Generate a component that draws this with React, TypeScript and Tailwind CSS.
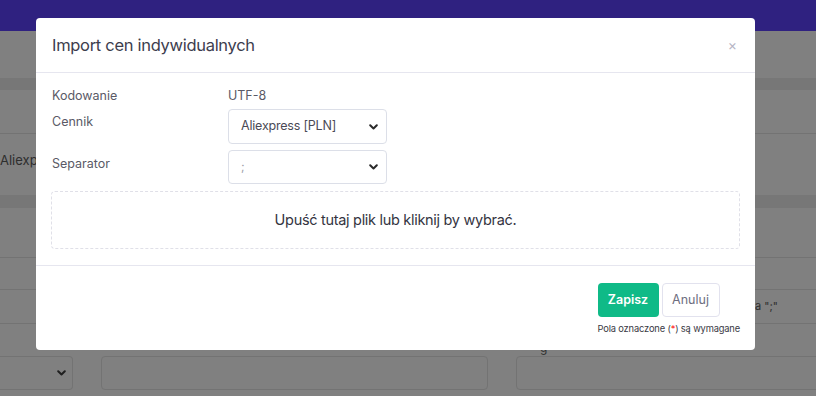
import React from "react";

const Chevron = ({ className = "" }: { className?: string }) => (
  <svg className={className} width="9" height="6" viewBox="0 0 9 6" fill="none">
    <path d="M1.2 1.2 L4.5 4.5 L7.8 1.2" stroke="currentColor" strokeWidth="2" strokeLinecap="round" strokeLinejoin="round" />
  </svg>
);

function Background() {
  return (
    <div className="flex flex-col w-[816px] h-[396px] bg-[#808080] overflow-hidden">
      <div className="h-[31px] bg-[#2f2180] shrink-0" />
      <div className="h-[47px] shrink-0" />
      <div className="h-[12px] bg-[#777777] shrink-0" />
      <div className="h-[44px] shrink-0 border-b border-[#737373]" />
      <div className="h-[61px] shrink-0 flex items-center">
        <div className="w-[36px] overflow-hidden whitespace-nowrap -mt-[12px]">
          <span className="text-[13px] text-[#2e2e2e]">Aliexpr</span>
        </div>
      </div>
      <div className="h-[13px] bg-[#777777] shrink-0" />
      <div className="h-[50px] shrink-0 border-b border-[#737373]" />
      <div className="h-[32px] shrink-0 border-b border-[#737373]" />
      <div className="h-[34px] shrink-0 border-b border-[#737373] flex items-center pl-[755px]">
        <span className="text-[11px] text-[#2e2e2e] whitespace-nowrap">a ";"</span>
      </div>
      <div className="h-[32px] shrink-0 flex items-end pl-[540px]">
        <span className="text-[12px] text-[#333] leading-none mb-[2px]">g</span>
      </div>
      <div className="flex gap-[28px] shrink-0">
        <div className="w-[73px] h-[34px] shrink-0 border border-[#737373] rounded-r-[4px] border-l-0 flex items-center justify-end pr-[6px] text-[#1f1f1f]">
          <Chevron />
        </div>
        <div className="w-[387px] h-[34px] border border-[#737373] rounded-[4px] shrink-0" />
        <div className="w-[310px] h-[34px] border border-[#737373] rounded-[4px] shrink-0" />
      </div>
    </div>
  );
}

export default function App() {
  return (
    <div className="relative w-[816px] h-[396px] overflow-hidden" style={{ fontFamily: "Inter, 'Noto Sans', sans-serif" }}>
      <Background />
      <div className="absolute left-[36px] top-[18px] w-[719px] h-[332px] bg-white rounded-[4px] flex flex-col">
        <div className="h-[55px] border-b border-[#e6e6ef] flex items-center justify-between pl-[16px] pr-[18px] shrink-0">
          <span className="text-[16.5px] text-[#3d3d4e] tracking-[-0.3px]">Import cen indywidualnych</span>
          <span className="text-[#b4b4c4] text-[14px] leading-none">×</span>
        </div>
        <div className="flex flex-col px-[15px] pt-[15px] shrink-0">
          <div className="flex items-center h-[16px]">
            <span className="w-[177px] pl-[1px] text-[12.5px] text-[#5a5a66]">Kodowanie</span>
            <span className="text-[12.5px] text-[#5a5a66]">UTF-8</span>
          </div>
          <div className="flex mt-[5px]">
            <span className="w-[177px] pl-[1px] text-[12.5px] text-[#5a5a66] pt-[4px]">Cennik</span>
            <div className="w-[159px] h-[35px] border border-[#dcdfe8] rounded-[4px] flex items-center justify-between pl-[12px] pr-[8px]">
              <span className="text-[12.5px] text-[#4a4a55] tracking-[-0.2px]">Aliexpress [PLN]</span>
              <Chevron className="text-[#2a2a2a]" />
            </div>
          </div>
          <div className="flex mt-[6px]">
            <span className="w-[177px] pl-[1px] text-[12.5px] text-[#5a5a66] pt-[5px]">Separator</span>
            <div className="w-[159px] h-[34px] border border-[#dcdfe8] rounded-[4px] flex items-center justify-between pl-[12px] pr-[8px]">
              <span className="text-[12px] text-[#a0a0a8]">;</span>
              <Chevron className="text-[#2a2a2a]" />
            </div>
          </div>
          <div className="mt-[7px] h-[58px] border border-dashed border-[#e0e0e8] rounded-[4px] flex items-center justify-center">
            <span className="text-[14.5px] text-[#34343f] tracking-[-0.3px]">Upuść tutaj plik lub kliknij by wybrać.</span>
          </div>
        </div>
        <div className="mt-[16px] border-t border-[#e6e6ef] flex justify-end pr-[15px] pt-[17px]">
          <div className="flex flex-col items-start">
            <div className="flex gap-[3px]">
              <div className="w-[61px] h-[34px] rounded-[4px] bg-[#0fba87] flex items-center justify-center text-white text-[12.5px] font-semibold">Zapisz</div>
              <div className="w-[58px] h-[34px] rounded-[4px] border border-[#e2e2ee] flex items-center justify-center text-[#6e6e80] text-[12.5px]">Anuluj</div>
            </div>
            <span className="mt-[5px] text-[9.3px] text-[#3a3a44] tracking-[-0.15px] whitespace-nowrap">
              Pola oznaczone (<span className="text-[#ff1a1a]">*</span>) są wymagane
            </span>
          </div>
        </div>
      </div>
    </div>
  );
}
